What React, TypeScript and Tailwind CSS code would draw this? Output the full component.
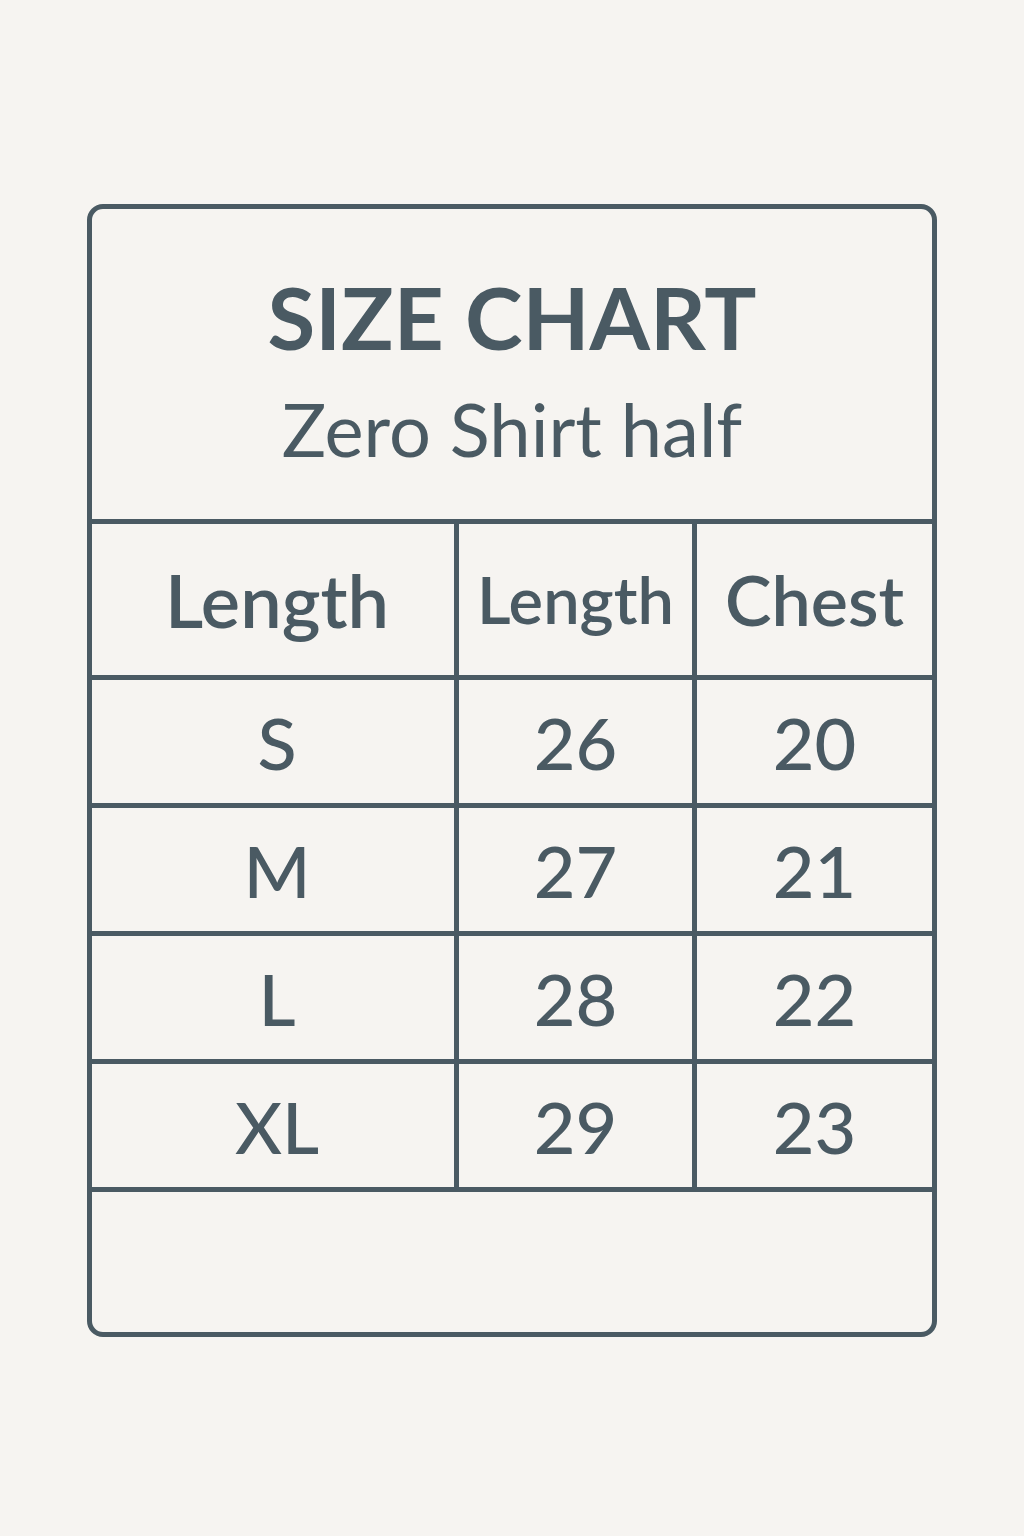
import React from "react";

const rows = [
  ["S", "26", "20"],
  ["M", "27", "21"],
  ["L", "28", "22"],
  ["XL", "29", "23"],
];

export default function App() {
  return (
    <div
      className="w-[1024px] h-[1536px] bg-[#f6f4f1] pt-[204px] pl-[87px]"
      style={{ fontFamily: "Lato, 'Noto Sans', sans-serif" }}
    >
      <div className="w-[850px] border-[5px] border-[#4a5a63] rounded-[16px] text-[#4a5a63] overflow-hidden">
        <div className="h-[310px] flex flex-col items-center">
          <div className="mt-[63px] text-[87px] font-bold leading-[90px]">SIZE CHART</div>
          <div className="mt-[30px] text-[74px] font-normal leading-[74px]">Zero Shirt half</div>
        </div>
        <div className="flex h-[156px] border-t-[5px] border-[#4a5a63] font-semibold">
          <div className="w-[362px] flex items-center justify-center pl-[8px] text-[74px]">Length</div>
          <div className="w-[238px] border-l-[5px] border-[#4a5a63] flex items-center justify-center text-[65px]">Length</div>
          <div className="flex-1 border-l-[5px] border-[#4a5a63] flex items-center justify-center text-[70px]">Chest</div>
        </div>
        {rows.map((r) => (
          <div key={r[0]} className="flex h-[128px] border-t-[5px] border-[#4a5a63] text-[72px] font-medium">
            <div className="w-[362px] flex items-center justify-center pl-[8px]">{r[0]}</div>
            <div className="w-[238px] border-l-[5px] border-[#4a5a63] flex items-center justify-center">{r[1]}</div>
            <div className="flex-1 border-l-[5px] border-[#4a5a63] flex items-center justify-center">{r[2]}</div>
          </div>
        ))}
        <div className="h-[145px] border-t-[5px] border-[#4a5a63]" />
      </div>
    </div>
  );
}
